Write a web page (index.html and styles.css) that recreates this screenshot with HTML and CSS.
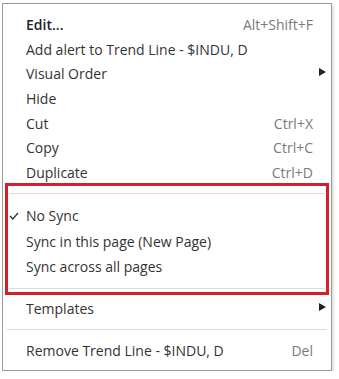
FILE: index.html
```html
<!DOCTYPE html>
<html lang="en">
<head>
    <meta charset="UTF-8">
    <meta name="viewport" content="width=device-width, initial-scale=1.0">
    <title>Trend Line Menu</title>
    <link rel="stylesheet" href="styles.css">
</head>
<body>
    <div class="menu">
        <div class="menu-item bold"><span class="label">Edit...</span><span class="shortcut">Alt+Shift+F</span><span class="sub"></span></div>
        <div class="menu-item"><span class="label">Add alert to Trend Line - $INDU, D</span><span class="sub"></span></div>
        <div class="menu-item"><span class="label">Visual Order</span><span class="sub"><span class="arrow"></span></span></div>
        <div class="menu-item"><span class="label">Hide</span><span class="sub"></span></div>
        <div class="menu-item"><span class="label">Cut</span><span class="shortcut">Ctrl+X</span><span class="sub"></span></div>
        <div class="menu-item"><span class="label">Copy</span><span class="shortcut">Ctrl+C</span><span class="sub"></span></div>
        <div class="menu-item"><span class="label">Duplicate</span><span class="shortcut">Ctrl+D</span><span class="sub"></span></div>

        <div class="sync-group">
            <div class="separator"></div>
            <div class="menu-item sync">
                <svg class="check" width="10" height="8" viewBox="0 0 10 8"><polyline points="1,4 3.8,7 9,1" fill="none" stroke="#333" stroke-width="1.3"/></svg>
                <span class="label">No Sync</span><span class="sub"></span>
            </div>
            <div class="menu-item sync"><span class="label">Sync in this page (New Page)</span><span class="sub"></span></div>
            <div class="menu-item sync"><span class="label">Sync across all pages</span><span class="sub"></span></div>
            <div class="separator"></div>
        </div>

        <div class="menu-item templates"><span class="label">Templates</span><span class="sub"><span class="arrow"></span></span></div>
        <div class="separator bottom"></div>
        <div class="menu-item"><span class="label">Remove Trend Line - $INDU, D</span><span class="shortcut">Del</span><span class="sub"></span></div>
    </div>
</body>
</html>
```

FILE: styles.css
```css
/* Base styles */
* {
    margin: 0;
    padding: 0;
    box-sizing: border-box;
}

body {
    background: #fff;
    font-family: 'Open Sans', 'Noto Sans', sans-serif;
    font-size: 14px;
    color: #333;
}

/* Context menu */
.menu {
    margin: 3px 0 0 2px;
    width: 330px;
    height: 368px;
    border: 1px solid #9a9a9a;
    background: #fff;
    box-shadow: 2px 2px 2px rgba(0, 0, 0, 0.12);
    padding-top: 8px;
}

.menu-item {
    position: relative;
    display: flex;
    align-items: center;
    height: 24.7px;
    padding-left: 23px;
    white-space: nowrap;
}

.menu-item.bold .label {
    font-weight: 600;
    color: #222;
}

.label {
    flex: 1;
}

.shortcut {
    color: #7a7a7a;
}

.sub {
    width: 18px;
    height: 100%;
    display: flex;
    align-items: center;
    padding-left: 6px;
}

.arrow {
    width: 0;
    height: 0;
    border-top: 4px solid transparent;
    border-bottom: 4px solid transparent;
    border-left: 7px solid #222;
    margin-top: -3px;
}

.check {
    position: absolute;
    left: 1px;
    top: 9px;
}

.separator {
    height: 1px;
    background: #dcdcdc;
    margin: 0 4px;
}

/* Highlighted sync section */
.sync-group {
    margin: -2px 2px 0;
    border: 3px solid #d41f2b;
    padding: 7px 0 3px;
}

.sync-group .separator {
    margin: 0 1px;
}

.sync-group .separator:first-child {
    margin-bottom: 9px;
}

.sync-group .separator:last-child {
    margin-top: 9px;
}

.menu-item.sync {
    height: 25.5px;
    padding-left: 18px;
}

.menu-item.templates {
    margin-top: 1px;
}

.separator.bottom {
    margin: 8px 4px 8px;
}
```
